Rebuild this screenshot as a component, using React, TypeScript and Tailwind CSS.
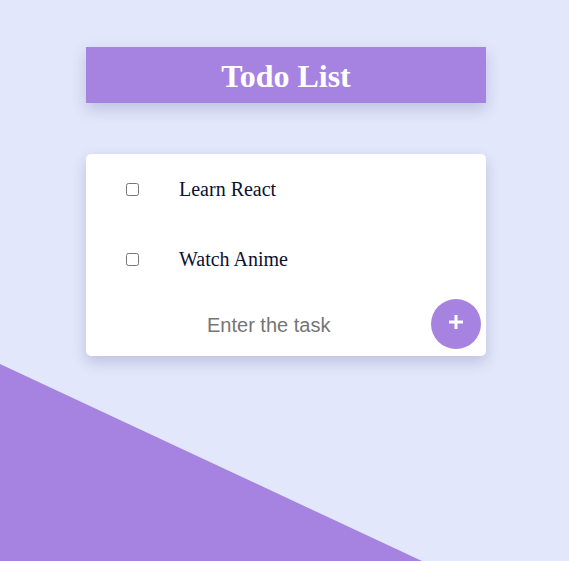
import { useState } from "react";

const tasks = ["Learn React", "Watch Anime"];

export default function App() {
  const [done, setDone] = useState<boolean[]>(tasks.map(() => false));

  return (
    <div className="relative min-h-screen h-[561px] overflow-hidden bg-[#e2e7fb]">
      {/* decorative wedge */}
      <div className="absolute inset-0 bg-[#a683e1] [clip-path:polygon(0_364px,422px_561px,0_561px)]" />

      <div className="relative flex flex-col pt-[47px] pl-[86px]">
        <header className="w-[400px] h-[56px] flex items-center justify-center bg-[#a683e1] shadow-[0_6px_14px_rgba(60,60,120,0.22)]">
          <h1 className="font-['Liberation_Serif',serif] font-bold text-[32px] leading-none text-white pt-[2px]">
            Todo List
          </h1>
        </header>

        <div className="mt-[51px] w-[400px] h-[202px] bg-white rounded-[5px] shadow-[0_6px_14px_rgba(60,60,120,0.22)] flex flex-col">
          {tasks.map((t, i) => (
            <label key={t} className="h-[70px] flex items-center pl-[40px] gap-[40px] shrink-0">
              <input
                type="checkbox"
                checked={done[i]}
                onChange={() => setDone(done.map((d, j) => (j === i ? !d : d)))}
                className="w-[13px] h-[13px]"
              />
              <span className="font-['Liberation_Serif',serif] text-[20px] text-[#0b1230]">{t}</span>
            </label>
          ))}
          <div className="flex-1 flex items-center pl-[121px] pr-[5px]">
            <input
              placeholder="Enter the task"
              className="flex-1 min-w-0 bg-transparent outline-none font-['Liberation_Sans',Arial,sans-serif] text-[20px] text-[#333] placeholder:text-[#757575]"
            />
            <button className="w-[50px] h-[50px] mb-[2px] rounded-full bg-[#a683e1] flex items-center justify-center">
              <svg width="16" height="16" viewBox="0 0 16 16" className="-mt-[4px]">
                <path d="M8 1v14M1 8h14" stroke="white" strokeWidth="3" />
              </svg>
            </button>
          </div>
        </div>
      </div>
    </div>
  );
}
